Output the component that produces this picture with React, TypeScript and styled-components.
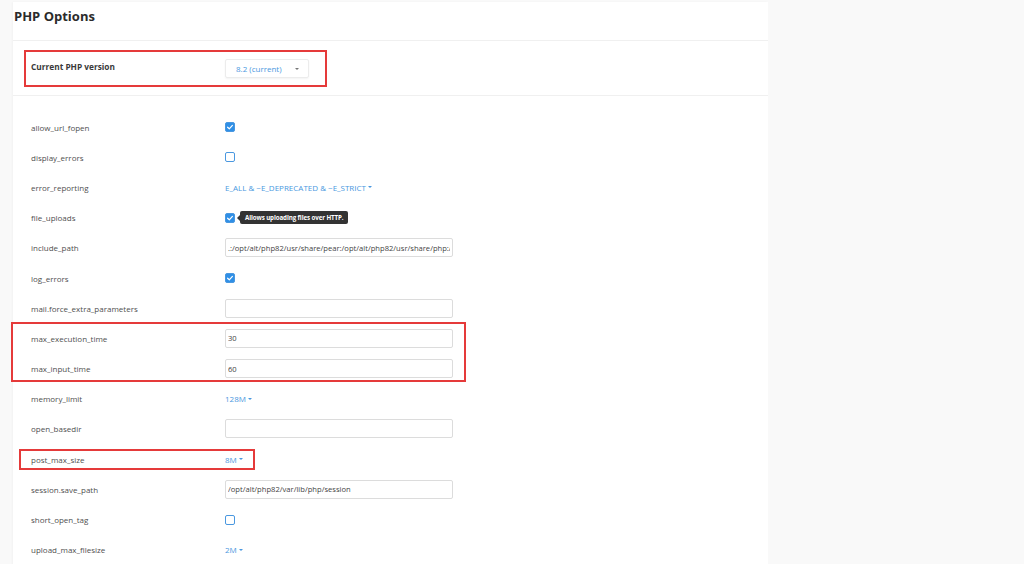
import React from "react";
import styled, { createGlobalStyle } from "styled-components";

type Option = {
  name: string;
  kind: "check" | "text" | "select";
  value?: string;
  checked?: boolean;
  tip?: string;
  mark?: { left: number; width: number; top: number; bottom: number };
};

const options: Option[] = [
  { name: "allow_url_fopen", kind: "check", checked: true },
  { name: "display_errors", kind: "check", checked: false },
  { name: "error_reporting", kind: "select", value: "E_ALL & ~E_DEPRECATED & ~E_STRICT" },
  { name: "file_uploads", kind: "check", checked: true, tip: "Allows uploading files over HTTP." },
  {
    name: "include_path",
    kind: "text",
    value: ".:/opt/alt/php82/usr/share/pear:/opt/alt/php82/usr/share/php:/usr/share/pear:/usr/share/php",
  },
  { name: "log_errors", kind: "check", checked: true },
  { name: "mail.force_extra_parameters", kind: "text", value: "" },
  { name: "max_execution_time", kind: "text", value: "30" },
  { name: "max_input_time", kind: "text", value: "60" },
  { name: "memory_limit", kind: "select", value: "128M" },
  { name: "open_basedir", kind: "text", value: "" },
  {
    name: "post_max_size",
    kind: "select",
    value: "8M",
    mark: { left: 6, width: 236, top: 5, bottom: 4 },
  },
  { name: "session.save_path", kind: "text", value: "/opt/alt/php82/var/lib/php/session" },
  { name: "short_open_tag", kind: "check", checked: false },
  { name: "upload_max_filesize", kind: "select", value: "2M" },
];

export default function App() {
  const renderValue = (opt: Option) => {
    if (opt.kind === "check") {
      return (
        <>
          <Check $on={!!opt.checked}>
            {opt.checked && (
              <svg width="8" height="8" viewBox="0 0 8 8">
                <path d="M1.6 4.2 L3.3 5.8 L6.4 2.4" fill="none" stroke="#fff" strokeWidth="1.2" strokeLinecap="round" strokeLinejoin="round" />
              </svg>
            )}
          </Check>
          {opt.tip && <Tip>{opt.tip}</Tip>}
        </>
      );
    }
    if (opt.kind === "select") {
      return (
        <Dropdown>
          {opt.value}
          <Caret />
        </Dropdown>
      );
    }
    return <Field readOnly value={opt.value} />;
  };

  const renderRow = (opt: Option) => (
    <Row key={opt.name}>
      {opt.mark && (
        <Mark
          style={{
            left: opt.mark.left,
            width: opt.mark.width,
            top: opt.mark.top,
            bottom: opt.mark.bottom,
          }}
        />
      )}
      <Label>{opt.name}</Label>
      <Value>{renderValue(opt)}</Value>
    </Row>
  );

  return (
    <Page>
      <GlobalStyle />
      <Panel>
        <Title>PHP Options</Title>
        <VersionSection>
          <VersionBox>
            <VersionLabel>Current PHP version</VersionLabel>
            <VersionSelect>
              8.2 (current)
              <GrayCaret />
            </VersionSelect>
          </VersionBox>
        </VersionSection>
        <List>
          {options.slice(0, 7).map(renderRow)}
          <Group>{options.slice(7, 9).map(renderRow)}</Group>
          {options.slice(9).map(renderRow)}
        </List>
      </Panel>
    </Page>
  );
}

const GlobalStyle = createGlobalStyle`
  html, body {
    margin: 0;
    padding: 0;
    background: #f9f9f9;
    font-family: "Open Sans", "Liberation Sans", sans-serif;
    overflow: hidden;
  }
`;

const Page = styled.div`
  padding: 2px 0 0 13px;
  height: 564px;
  box-sizing: border-box;
`;

const Panel = styled.main`
  width: 755px;
  min-height: 600px;
  background: #ffffff;
  box-shadow: -1px 0 2px rgba(0, 0, 0, 0.03);
`;

const Title = styled.h1`
  margin: 0;
  height: 39px;
  padding: 5px 0 0 1px;
  box-sizing: border-box;
  font-size: 13px;
  font-weight: 700;
  color: #2b2b2b;
  border-bottom: 1px solid #f0f0f0;
`;

const VersionSection = styled.section`
  padding: 9px 0 8px 11px;
  border-bottom: 1px solid #f0f0f0;
`;

const VersionBox = styled.div`
  display: flex;
  align-items: center;
  width: 303px;
  height: 37px;
  box-sizing: border-box;
  border: 2px solid #e53a3a;
  padding-left: 5px;
`;

const VersionLabel = styled.span`
  width: 194px;
  font-size: 8.3px;
  font-weight: 700;
  color: #3a3a3a;
  margin-top: -4px;
`;

const VersionSelect = styled.div`
  display: flex;
  align-items: center;
  justify-content: space-between;
  width: 84px;
  height: 19px;
  box-sizing: border-box;
  padding: 0 9px 0 10px;
  border: 1px solid #ececec;
  border-radius: 2px;
  box-shadow: 0 1px 2px rgba(0, 0, 0, 0.05);
  font-size: 8px;
  color: #4a98e0;
`;

const GrayCaret = styled.span`
  width: 0;
  height: 0;
  border-left: 2px solid transparent;
  border-right: 2px solid transparent;
  border-top: 2px solid #777;
`;

const List = styled.div`
  padding-top: 16px;
`;

const Group = styled.div`
  position: relative;

  &::after {
    content: "";
    position: absolute;
    left: -2px;
    width: 455px;
    top: -1px;
    bottom: 2px;
    border: 2px solid #e53a3a;
    box-sizing: border-box;
    pointer-events: none;
  }
`;

const Row = styled.div`
  position: relative;
  display: flex;
  align-items: center;
  height: 30.2px;
  padding-left: 18px;
`;

const Mark = styled.span`
  position: absolute;
  border: 2px solid #e53a3a;
  box-sizing: border-box;
  pointer-events: none;
`;

const Label = styled.span`
  width: 194px;
  font-size: 8px;
  color: #4f4f4f;
`;

const Value = styled.div`
  display: flex;
  align-items: center;
  gap: 5px;
`;

const Check = styled.span<{ $on: boolean }>`
  display: inline-flex;
  align-items: center;
  justify-content: center;
  width: 10px;
  height: 10px;
  box-sizing: border-box;
  border-radius: 2px;
  background: ${({ $on }) => ($on ? "#2f8fe6" : "#fff")};
  border: 1.2px solid #4a98e0;
`;

const Tip = styled.span`
  position: relative;
  display: inline-flex;
  align-items: center;
  height: 13px;
  padding: 0 5px;
  border-radius: 2px;
  background: #333;
  color: #fff;
  font-size: 6.2px;
  font-weight: 700;
  letter-spacing: -0.1px;

  &::before {
    content: "";
    position: absolute;
    left: -3px;
    top: 50%;
    margin-top: -3px;
    border-top: 3px solid transparent;
    border-bottom: 3px solid transparent;
    border-right: 3px solid #333;
  }
`;

const Dropdown = styled.span`
  display: inline-flex;
  align-items: center;
  gap: 2px;
  font-size: 8px;
  color: #4a98e0;
`;

const Caret = styled.span`
  width: 0;
  height: 0;
  border-left: 2px solid transparent;
  border-right: 2px solid transparent;
  border-top: 2px solid #4a98e0;
`;

const Field = styled.input`
  width: 228px;
  height: 19px;
  box-sizing: border-box;
  padding: 0 2px;
  border: 1px solid #dcdcdc;
  border-radius: 2px;
  font-family: "Open Sans", "Liberation Sans", sans-serif;
  font-size: 7.6px;
  color: #444;
  background: #fff;
  outline: none;
`;
